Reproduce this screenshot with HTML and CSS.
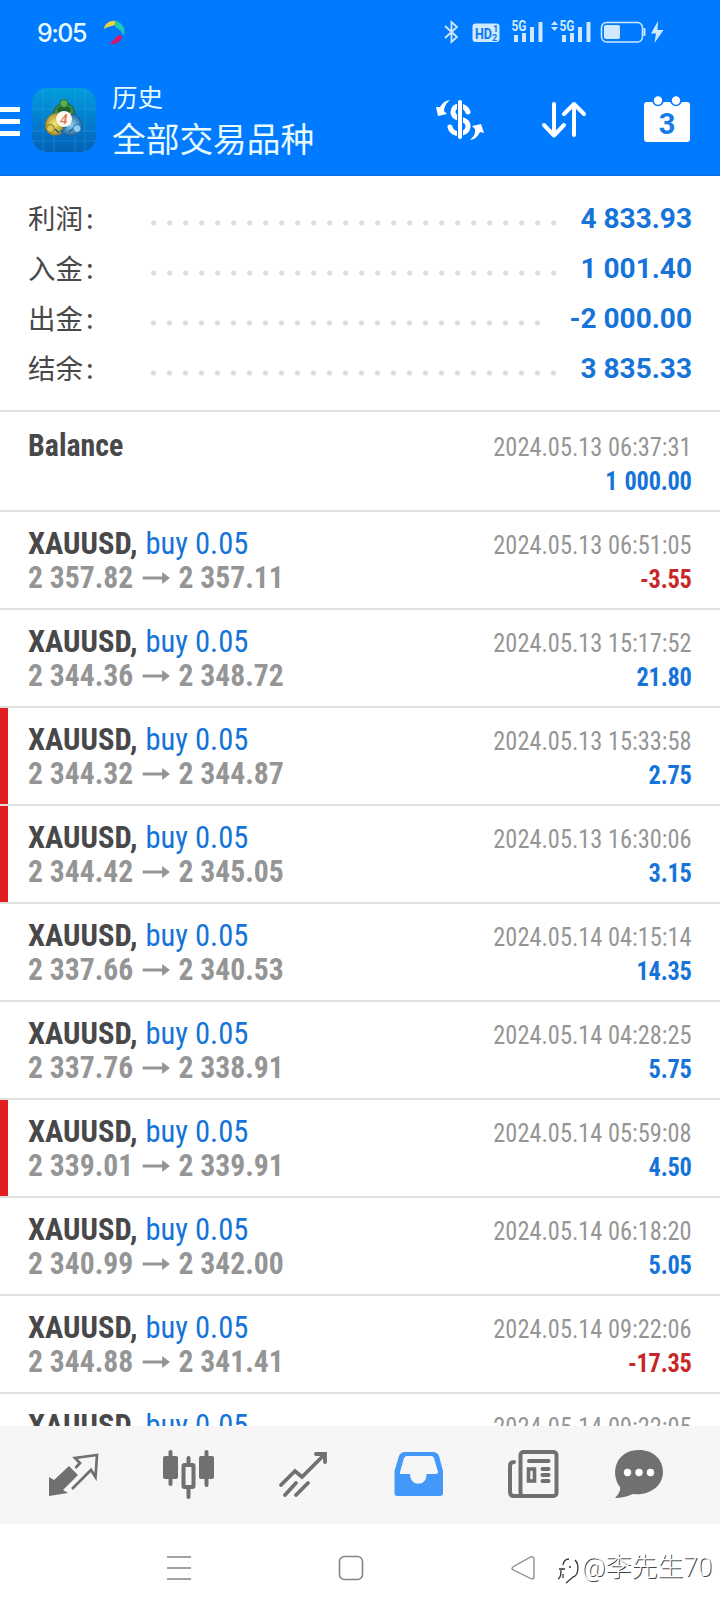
FILE: index.html
```html
<!DOCTYPE html>
<html lang="zh-CN">
<head>
<meta charset="utf-8">
<title>历史</title>
<link rel="stylesheet" href="styles.css">
</head>
<body>
<div class="phone">
  <header class="top">
    <div class="status">
      <span class="clock">9:05</span>
      <svg class="swirl" width="24" height="26" viewBox="102 19 24 26">
        <path d="M104 29C105 22 113 19 118 22C115 27 110 25 104 29Z" fill="#e8d33c"/>
        <path d="M115 21C122 22 126 28 124 35C122 34 121 29 115 27Z" fill="#21c9b4"/>
        <path d="M109 43C114 42 115 36 120 35Q122 35 122 37C121 42 114 46 109 43Z" fill="#d9176a"/>
      </svg>
      <svg class="indicators" width="224" height="26" viewBox="442 19 224 26">
        <path d="M445 26L457 37L451.500 42V22L457 27L445 38" fill="none" stroke="#cfe9ff" stroke-width="1.800"/>
        <rect x="472.500" y="23.500" width="27" height="18.500" rx="3" fill="#cfeaff"/>
        <g fill="#0a78f0" class="signal-text"><text x="475" y="38.500" font-size="15" textLength="17" lengthAdjust="spacingAndGlyphs">HD</text><text x="493" y="32" font-size="9">1</text><text x="492" y="41" font-size="9">2</text></g>
        <g fill="#cfeaff">
          <path d="M514 35h4v7h-4zM522 33h4v9h-4zM530 27h4v15h-4zM538.500 22h4v20h-4zM562 35h4v7h-4zM570 33h4v9h-4zM578 27h4v15h-4zM586.500 22h4v20h-4z"/>
          <path d="M551 25L554.500 21L558 25zM551 27L554.500 31L558 27z"/>
          <g class="signal-text"><text x="511.500" y="31" font-size="14" textLength="15" lengthAdjust="spacingAndGlyphs">5G</text><text x="559.500" y="31" font-size="14" textLength="15" lengthAdjust="spacingAndGlyphs">5G</text></g>
          <rect x="604" y="25" width="16" height="14" rx="2"/>
          <path d="M643.500 28h1q1 0 1 1v6q0 1-1 1h-1zM658 21L651 33.500H656L654.500 43L663.500 30H657.500Z"/>
        </g>
        <rect x="601.500" y="22.500" width="41" height="19.500" rx="5" fill="none" stroke="#cfeaff" stroke-width="1.500"/>
      </svg>
    </div>
    <div class="bar">
      <div class="burger"><i></i><i></i><i></i></div>
      <svg class="logo" width="64" height="64" viewBox="0 0 64 64">
        <defs>
          <linearGradient id="bg" x2="0" y2="1"><stop stop-color="#039ddb"/><stop offset=".6" stop-color="#0378cb"/><stop offset="1" stop-color="#0361b5"/></linearGradient>
          <radialGradient id="green"><stop stop-color="#8bc873"/><stop offset="1" stop-color="#28733a"/></radialGradient>
          <radialGradient id="gold"><stop stop-color="#f1ec78"/><stop offset="1" stop-color="#b1942a"/></radialGradient>
          <radialGradient id="sky"><stop stop-color="#94d4f4"/><stop offset="1" stop-color="#246eaa"/></radialGradient>
        </defs>
        <rect width="64" height="64" rx="15" fill="url(#bg)"/>
        <path d="M0 21H64M0 43H64M0 53H64M11 0V64M22 0V64M43 0V64M53 0V64" stroke="#35a9e4" stroke-width=".7" opacity=".5"/>
        <path d="M22 31C19 22 26 15 32 15C40 15 45 22 42 31Z" fill="url(#green)" stroke="#1c6131"/>
        <ellipse cx="32" cy="22" rx="7" ry="4" fill="#1d642e"/><circle cx="32" cy="15.500" r="4" fill="#58ae50" stroke="#24652f" stroke-width=".8"/>
        <path d="M24 25C16 27 12 33 14 41C17 49 27 48 31 44L30 31Z" fill="url(#gold)" stroke="#8d7925"/>
        <path d="M40 26C48 28 51 34 49 42C46 49 34 49 28 43Q35 43 40 26Z" fill="url(#sky)" stroke="#205d96"/>
        <path d="M14 43Q21 37 27 45M37 44Q43 37 49 43" fill="none" stroke="#236080" stroke-width="1.500"/>
        <circle cx="18.500" cy="40.500" r="4" fill="#d8c34e" stroke="#937b24"/><circle cx="45" cy="40.500" r="4" fill="#88cdf0" stroke="#2e76ae"/>
        <circle cx="32" cy="31" r="8" fill="#fff6ed"/><text x="32" y="36" text-anchor="middle" class="four">4</text>
      </svg>
      <div class="titles"><div class="sub">历史</div><div class="title">全部交易品种</div></div>
      <svg class="actions" width="260" height="52" viewBox="432 93 260 52">
        <g fill="none" stroke="#fff" stroke-linecap="round" stroke-linejoin="round">
          <path d="M468 112C465 104 453 104 453 112C453 121 468 117 468 126C468 136 452 136 450 127" stroke-width="5"/>
          <path d="M460 100.500V138.500" stroke="#007aff" stroke-width="6" stroke-linecap="butt"/>
          <path d="M460 102V137" stroke-width="4"/>
          <path d="M554 104V135M544 125L554 135.500L564 125M574 135V104M564 114L574 104L584 114" stroke-width="4"/>
        </g>
        <path d="M450 100Q443 101 440 107L436 107L438 116L447 114L444 111Q444 105 450 100ZM470 140Q477 139 480 132L484 133L481 124L472 126L475 129Q476 135 470 140Z" fill="#fff"/>
        <rect x="644" y="102" width="46" height="40" rx="3" fill="#fff"/>
        <circle cx="658" cy="100.500" r="5" fill="#fff" stroke="#007aff" stroke-width="1.600"/><circle cx="676" cy="100.500" r="5" fill="#fff" stroke="#007aff" stroke-width="1.600"/>
        <text x="667" y="134" text-anchor="middle" class="day">3</text>
      </svg>
    </div>
  </header>
  <section class="summary">
    <div class="sum"><span class="label">利润<em>:</em></span><i class="dots"></i><b>4 833.93</b></div>
    <div class="sum"><span class="label">入金<em>:</em></span><i class="dots"></i><b>1 001.40</b></div>
    <div class="sum"><span class="label">出金<em>:</em></span><i class="dots short"></i><b>-2 000.00</b></div>
    <div class="sum"><span class="label">结余<em>:</em></span><i class="dots"></i><b>3 835.33</b></div>
  </section>
  <main class="list" id="list"></main>
  <nav class="tabs">
    <svg width="720" height="98" viewBox="0 1426 720 98">
      <g fill="#707070">
        <path d="M69 1466L78 1475L63 1490L68 1493L49 1496V1477L54 1480Z"/>
        <path d="M72 1489L91 1470L95.500 1477L97 1455L75 1458L80 1463L75.500 1468" fill="none" stroke="#707070" stroke-width="2.700"/>
        <rect x="163" y="1456" width="15" height="23" rx="2"/><rect x="199" y="1456" width="15" height="23" rx="2"/>
        <path d="M170.500 1452V1484M206.500 1452V1485M188.500 1458V1464M188.500 1488V1497" stroke="#707070" stroke-width="4" stroke-linecap="round"/>
        <rect x="183.500" y="1465" width="10" height="22" rx="1" fill="none" stroke="#707070" stroke-width="4"/>
        <path d="M281 1485L295 1471L302 1477L324 1455M316 1454H325V1462M285 1495L296 1483M296 1495L308 1483" fill="none" stroke="#707070" stroke-width="3.800" stroke-linecap="round"/>
        <rect x="520.500" y="1452" width="36" height="44" rx="3" fill="none" stroke="#707070" stroke-width="4"/>
        <path d="M514 1462Q510 1462 510 1466V1492Q510 1496 514 1496H524M529 1461H548.500M542.500 1469H548.500M542.500 1475H548.500M542.500 1481H548.500" fill="none" stroke="#707070" stroke-width="4" stroke-linecap="round"/>
        <rect x="528.500" y="1469" width="6" height="12" fill="none" stroke="#707070" stroke-width="3.600"/>
        <path d="M639 1450C653 1450 663 1459 663 1472C663 1487 648 1496 633 1494Q624 1498 615 1498Q621 1492 620 1487C610 1474 615 1450 639 1450Z"/>
      </g>
      <g fill="#fff"><circle cx="627.500" cy="1472.500" r="3.700"/><circle cx="639" cy="1472.500" r="3.700"/><circle cx="650.500" cy="1472.500" r="3.700"/></g>
      <path d="M405 1452H433Q437 1452 439 1456L443 1471V1493Q443 1496 440 1496H397Q394.500 1496 394.500 1493V1471L399 1456Q401 1452 405 1452Z" fill="#4299fa"/>
      <path d="M407 1456H431Q433 1456 434 1458L438 1472Q438 1474 436 1474H426.500C427 1487 410 1487 410 1474H401Q399.500 1474 400 1472L404 1458Q405 1456 407 1456Z" fill="#f6f6f6"/>
    </svg>
  </nav>
  <footer class="system">
    <svg width="720" height="88" viewBox="0 1524 720 88" fill="none" stroke="#858585" stroke-width="1.600">
      <path d="M167 1557H191M167 1568H191M167 1579H191"/>
      <rect x="339.500" y="1556.500" width="23" height="23" rx="5"/>
      <path d="M513.500 1566.500L530.500 1557Q534 1556 534 1559V1576Q534 1580 530.500 1578.500L513.500 1570Q510.500 1568.500 513.500 1566.500Z" stroke-width="1.300"/>
      <path d="M558 1579Q561 1578 561 1570M559 1569H565M563 1565Q564 1559 569 1559M575 1560C580 1565 578 1576 573 1577L566 1583M563 1574V1578M569 1567H571" stroke="#333" stroke-width="1.300"/>
    </svg>
    <span class="watermark">@李先生70</span>
  </footer>
</div>
<script src="app.js"></script>
</body>
</html>
```
FILE: styles.css
```css
body { margin: 0; background: #fff; }
.phone { width: 720px; height: 1612px; display: flex; flex-direction: column; overflow: hidden; font-family: Roboto, "Noto Sans CJK SC", sans-serif; background: #fff; }
.top { height: 176px; flex: none; background: #007aff; box-sizing: border-box; border-bottom: 1px solid #0871df; }
.status { height: 64px; display: flex; align-items: center; padding: 0 54px 0 37px; }
.clock { color: #e8fbff; font: 500 25px/64px Inter, sans-serif; letter-spacing: -1.5px; width: 65px; padding-top: 1px; }
.indicators { margin-left: auto; }
.signal-text { font-family: Roboto, sans-serif; font-weight: 700; }
.bar { height: 112px; display: flex; align-items: flex-start; }
.burger { width: 20px; padding-top: 43px; display: flex; flex-direction: column; gap: 7px; }
.burger i { height: 5px; background: #fff; }
.logo { margin: 24px 0 0 12px; }
.four { font: italic 700 14px "Liberation Serif", serif; fill: #dc7550; }
.titles { margin-left: 16px; padding-top: 14px; color: #e8fbff; font-family: "Noto Sans CJK SC", sans-serif; }
.sub { font-size: 25.5px; line-height: 36px; }
.title { font-size: 33.7px; line-height: 48px; }
.actions { margin: 29px 28px 0 auto; }
.day { font: 700 29px Roboto, sans-serif; fill: #147be8; }
.summary { height: 236px; flex: none; box-sizing: border-box; padding: 17px 28px 0; border-bottom: 2px solid #e0e0e0; }
.sum { height: 50px; display: flex; align-items: center; }
.label { width: 122px; white-space: nowrap; color: #48484a; font: 27.5px/48px "Noto Sans CJK SC", sans-serif; padding-bottom: 2px; }
.label em { font-style: normal; margin-left: 3px; }
.dots { width: 416px; height: 6px; margin-top: 10px; background: radial-gradient(circle at 3.500px 3px, #dedede 2.200px, transparent 3px) 0 0 / 16px 6px; }
.dots.short { width: 400px; }
.sum b { margin-left: auto; color: #1674d8; font-size: 28px; white-space: nowrap; }
.list { height: 1014px; flex: none; overflow: hidden; }
.row { height: 98px; box-sizing: border-box; padding: 14px 28px 0; display: flex; justify-content: space-between; border-bottom: 2px solid #e0e0e0; font-stretch: 75%; font-family: "Roboto Condensed", Roboto, sans-serif; }
.row.first { height: 100px; padding-top: 16px; }
.row.marked { box-shadow: inset 8px 0 #e02020; }
.name { color: #48484a; font-size: 32px; line-height: 34px; font-weight: 700; white-space: nowrap; transform: scaleX(.955); transform-origin: left; }
.first .name { transform: scaleX(.935); }
.name span { color: #1674d8; font-weight: 400; margin-left: 1px; }
.prices { color: #959595; font-size: 32px; line-height: 34px; font-weight: 700; display: flex; align-items: center; white-space: nowrap; transform: scaleX(.925); transform-origin: left; }
.arrow { margin: 2px 9px 0; }
.right { text-align: right; padding-top: 1px; transform: scaleX(.937); transform-origin: right; }
.date { color: #959595; font-size: 26px; line-height: 36px; white-space: nowrap; }
.value { color: #1674d8; font-size: 26px; line-height: 32px; font-weight: 700; letter-spacing: -.3px; word-spacing: 2px; }
.value.loss { color: #c62828; }
.tabs { height: 98px; flex: none; background: #f6f6f6; }
.system { height: 88px; flex: none; position: relative; background: #fff; }
.watermark { position: absolute; right: 8px; top: 25px; font: 300 26px/36px Roboto, "Noto Sans CJK SC", sans-serif; color: #fff; text-shadow: 1px 1px 0 #444; white-space: nowrap; }
```
FILE: app.js
```js
const trades = [
  ["2 357.82", "2 357.11", "2024.05.13 06:51:05", "-3.55"],
  ["2 344.36", "2 348.72", "2024.05.13 15:17:52", "21.80"],
  ["2 344.32", "2 344.87", "2024.05.13 15:33:58", "2.75", true],
  ["2 344.42", "2 345.05", "2024.05.13 16:30:06", "3.15", true],
  ["2 337.66", "2 340.53", "2024.05.14 04:15:14", "14.35"],
  ["2 337.76", "2 338.91", "2024.05.14 04:28:25", "5.75"],
  ["2 339.01", "2 339.91", "2024.05.14 05:59:08", "4.50", true],
  ["2 340.99", "2 342.00", "2024.05.14 06:18:20", "5.05"],
  ["2 344.88", "2 341.41", "2024.05.14 09:22:06", "-17.35"],
  ["", "", "2024.05.14 09:22:05", ""]
];
const arrow = '<svg class="arrow" width="31" height="14" viewBox="0 0 31 14"><path d="M1 5.500H22V1L30.500 7L22 13V8.500H1Z" fill="#959595"/></svg>';
document.getElementById("list").innerHTML =
  '<div class="row first"><div class="name">Balance</div><div class="right"><div class="date">2024.05.13 06:37:31</div><div class="value">1 000.00</div></div></div>' +
  trades.map(([from, to, date, value, marked]) =>
    `<div class="row${marked ? " marked" : ""}"><div><div class="name">XAUUSD, <span>buy 0.05</span></div>` +
    (from ? `<div class="prices">${from}${arrow}${to}</div>` : "") +
    `</div><div class="right"><div class="date">${date}</div><div class="value${value[0] === "-" ? " loss" : ""}">${value}</div></div></div>`
  ).join("");
```
